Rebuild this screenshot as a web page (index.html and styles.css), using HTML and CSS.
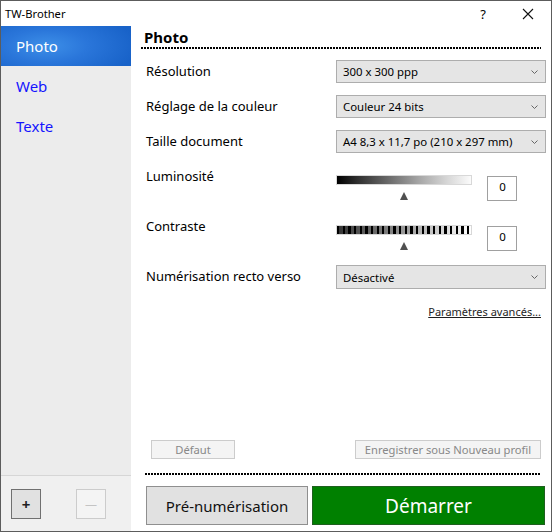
FILE: index.html
```html
<!DOCTYPE html>
<html lang="fr">
<head>
<meta charset="utf-8">
<title>TW-Brother</title>
<link rel="stylesheet" href="styles.css">
</head>
<body>
<div class="window">
  <div class="titlebar">
    <span class="title">TW-Brother</span>
    <span class="help">?</span>
    <span class="close"><svg width="12" height="12" viewBox="0 0 12 12"><path d="M1 1L11 11M11 1L1 11" stroke="#111" stroke-width="1.1" fill="none"/></svg></span>
  </div>
  <div class="main">
    <aside class="sidebar">
      <ul class="profiles">
        <li class="profile selected">Photo</li>
        <li class="profile">Web</li>
        <li class="profile">Texte</li>
      </ul>
      <div class="side-footer">
        <button class="sq-btn">+</button>
        <button class="sq-btn disabled">&#8212;</button>
      </div>
    </aside>
    <section class="content">
      <h1 class="heading">Photo</h1>
      <div class="dots"></div>
      <div class="row">
        <span class="label">Résolution</span>
        <div class="select"><span>300 x 300 ppp</span><svg class="chev" width="7" height="4" viewBox="0 0 7 4"><path d="M0.5 0.5L3.5 3.5L6.5 0.5" stroke="#666" stroke-width="1" fill="none"/></svg></div>
      </div>
      <div class="row">
        <span class="label">Réglage de la couleur</span>
        <div class="select"><span>Couleur 24 bits</span><svg class="chev" width="7" height="4" viewBox="0 0 7 4"><path d="M0.5 0.5L3.5 3.5L6.5 0.5" stroke="#666" stroke-width="1" fill="none"/></svg></div>
      </div>
      <div class="row">
        <span class="label">Taille document</span>
        <div class="select"><span>A4 8,3 x 11,7 po (210 x 297 mm)</span><svg class="chev" width="7" height="4" viewBox="0 0 7 4"><path d="M0.5 0.5L3.5 3.5L6.5 0.5" stroke="#666" stroke-width="1" fill="none"/></svg></div>
      </div>
      <div class="slider-row">
        <span class="label">Luminosité</span>
        <div class="slider">
          <div class="bar bright"></div>
          <div class="thumb"></div>
        </div>
        <div class="valbox">0</div>
      </div>
      <div class="slider-row">
        <span class="label">Contraste</span>
        <div class="slider">
          <div class="bar contrast"></div>
          <div class="thumb"></div>
        </div>
        <div class="valbox">0</div>
      </div>
      <div class="row duplex">
        <span class="label">Numérisation recto verso</span>
        <div class="select tall"><span>Désactivé</span><svg class="chev" width="7" height="4" viewBox="0 0 7 4"><path d="M0.5 0.5L3.5 3.5L6.5 0.5" stroke="#666" stroke-width="1" fill="none"/></svg></div>
      </div>
      <div class="link-row"><a class="adv">Paramètres avancés...</a></div>
      <div class="spacer"></div>
      <div class="profile-btns">
        <button class="small-btn default">Défaut</button>
        <button class="small-btn save">Enregistrer sous Nouveau profil</button>
      </div>
      <div class="dots bottom-dots"></div>
      <div class="actions">
        <button class="big-btn prescan">Pré-numérisation</button>
        <button class="big-btn start">Démarrer</button>
      </div>
    </section>
  </div>
</div>
</body>
</html>
```

FILE: styles.css
```css
* { box-sizing: border-box; }
html, body { margin: 0; padding: 0; background: #fff; }
body { font-family: "Noto Sans", "Open Sans", sans-serif; color: #000; }

.window {
  width: 552px;
  height: 532px;
  border: 1px solid #5c5c5c;
  display: flex;
  flex-direction: column;
  background: #fff;
}

.titlebar {
  height: 25px;
  display: flex;
  align-items: center;
  font-size: 11.2px;
  flex: none;
}
.title { padding-left: 4px; flex: 1; }
.help { width: 18px; text-align: center; font-size: 13px; margin-right: 30px; }
.close { width: 12px; height: 12px; margin-right: 17px; display: flex; }

.main { flex: 1; display: flex; min-height: 0; }

.sidebar {
  width: 130px;
  flex: none;
  display: flex;
  flex-direction: column;
  background: #f0f0f0;
}
.profiles {
  list-style: none;
  margin: 0;
  padding: 0;
  flex: 1;
  background: #ececec;
  border-bottom: 1px solid #d6d6d6;
}
.profile {
  height: 40px;
  line-height: 40px;
  padding-left: 15px;
  font-size: 15px;
  color: #1414ff;
}
.profile.selected {
  color: #fff;
  background: radial-gradient(ellipse 70% 90% at 35% 50%, #3d8fe8 0%, #2a76da 45%, #1862c8 100%);
}
.side-footer {
  height: 55px;
  flex: none;
  display: flex;
  align-items: flex-start;
  padding-top: 13px;
  padding-left: 10px;
  gap: 35px;
}
.sq-btn {
  width: 30px;
  height: 30px;
  border: 1px solid #707070;
  background: #e1e1e1;
  font-family: inherit;
  font-size: 15px;
  font-weight: bold;
  padding: 0;
  color: #222;
}
.sq-btn.disabled {
  border-color: #cccccc;
  background: #f4f4f4;
  color: #c4c4c4;
  font-weight: normal;
  font-size: 12px;
}

.content {
  flex: 1;
  display: flex;
  flex-direction: column;
  padding: 0 5px 6px 10px;
}
.heading {
  margin: 0;
  font-size: 15px;
  font-weight: bold;
  line-height: 19px;
  padding: 2px 0 0 3px;
  height: 21px;
}
.dots {
  height: 2px;
  margin-right: 5px;
  background: repeating-linear-gradient(to right, #000 0 2px, transparent 2px 3px);
  flex: none;
}
.heading + .dots { margin-bottom: 5px; }

.row {
  height: 35px;
  display: flex;
  align-items: center;
  flex: none;
}
.label {
  width: 195px;
  padding-left: 5px;
  font-size: 13px;
  flex: none;
}
.row .label { margin-top: -2px; }
.select {
  width: 210px;
  height: 23px;
  border: 1px solid #adadad;
  background: #e5e5e5;
  display: flex;
  align-items: center;
  padding: 0 7px 0 6px;
  font-size: 11.4px;
}
.select span { flex: 1; }
.select.tall { height: 24px; }
.chev { flex: none; }

.slider-row {
  height: 50px;
  display: flex;
  align-items: flex-start;
  padding-top: 16px;
  flex: none;
}
.slider-row .label { margin-top: -8px; }
.slider { width: 136px; display: flex; flex-direction: column; align-items: center; }
.bar {
  width: 136px;
  height: 10px;
  border: 1px solid #d8d8d8;
}
.bar.bright {
  background: linear-gradient(to right, #000 0%, #2e2e2e 15%, #6e6e6e 40%, #a8a8a8 62%, #d6d6d6 82%, #fbfbfb 100%);
}
.bar.contrast {
  background:
    repeating-linear-gradient(to right, #000 0 2.3px, transparent 2.3px 5.65px),
    linear-gradient(to right, #333 0%, #777 35%, #bbb 65%, #fff 100%);
}
.thumb {
  margin-top: 7px;
  width: 0;
  height: 0;
  border-left: 4px solid transparent;
  border-right: 4px solid transparent;
  border-bottom: 8px solid #505050;
}
.valbox {
  margin-left: 15px;
  margin-top: 1px;
  width: 30px;
  height: 25px;
  border: 1px solid #a0a0a0;
  font-size: 11.5px;
  text-align: center;
  line-height: 20px;
  padding-left: 1px;
}
.row.duplex { height: 36px; }

.link-row {
  display: flex;
  justify-content: flex-end;
  padding-right: 5px;
  margin-top: 9px;
  flex: none;
}
.adv {
  font-size: 11px;
  color: #1e1e1e;
  text-decoration: underline;
}

.spacer { flex: 1; }

.profile-btns {
  display: flex;
  justify-content: space-between;
  padding: 0 5px 0 10px;
  margin-bottom: 14px;
  flex: none;
}
.small-btn {
  height: 19px;
  border: 1px solid #cccccc;
  background: #f4f4f4;
  color: #888;
  font-family: inherit;
  font-size: 11.2px;
  padding: 0;
  line-height: 15px;
}
.small-btn.default { width: 84px; }
.small-btn.save { width: 186px; }

.bottom-dots { margin-left: 4px; margin-bottom: 11px; }

.actions {
  display: flex;
  gap: 4px;
  padding-left: 5px;
  flex: none;
}
.big-btn {
  height: 39px;
  font-family: inherit;
  padding: 0;
}
.prescan {
  width: 162px;
  border: 1px solid #8f8f8f;
  background: #e1e1e1;
  color: #111;
  font-size: 15px;
}
.start {
  width: 233px;
  border: 1px solid #1f5f1f;
  background: #008000;
  color: #fff;
  font-size: 19px;
}
```
